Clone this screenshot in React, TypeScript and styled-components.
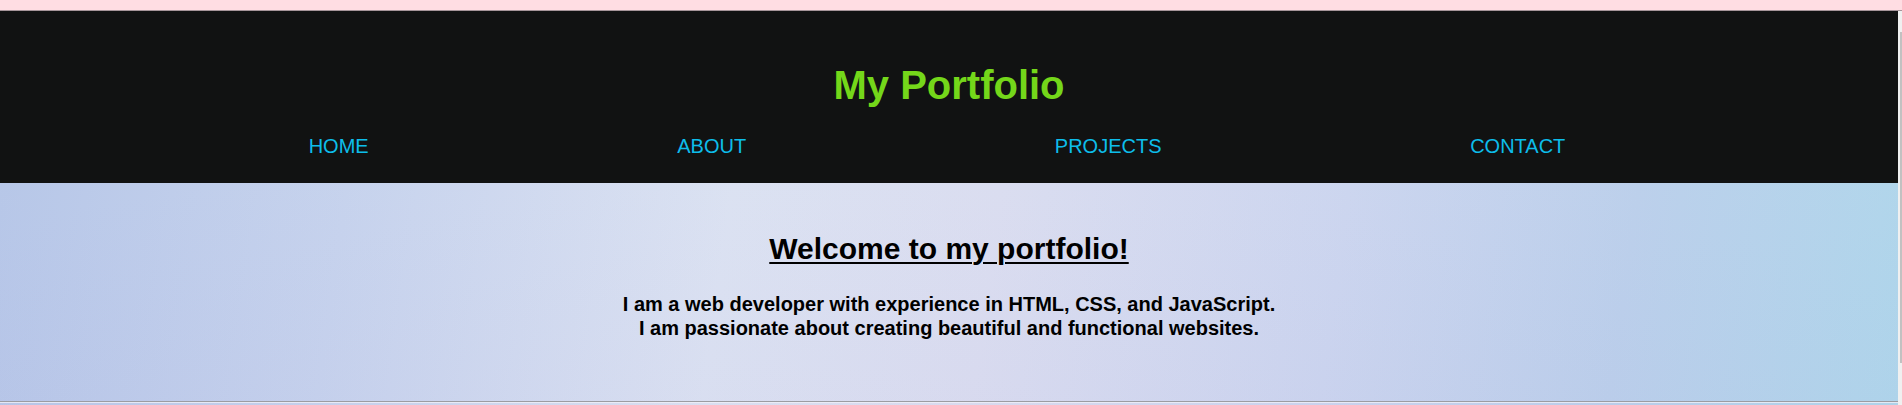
import React from "react";
import styled, { createGlobalStyle } from "styled-components";

const GlobalStyle = createGlobalStyle`
  html, body {
    margin: 0;
    padding: 0;
    height: 405px;
    overflow: hidden;
    background: #ffdde3;
  }
  #root {
    height: 405px;
  }
  * {
    box-sizing: border-box;
  }
`;

const Page = styled.div`
  height: 405px;
  display: flex;
  flex-direction: column;
  padding-top: 10px;
  background: #ffdde3;
  font-family: "Liberation Sans", Arial, sans-serif;
`;

const Window = styled.div`
  flex: 1;
  display: flex;
  min-height: 0;
  border-top: 1px solid #a6959a;
`;

const Content = styled.div`
  flex: 1;
  display: flex;
  flex-direction: column;
  min-width: 0;
`;

const Header = styled.header`
  background: #111212;
  padding: 52px 0 25px;
  text-align: center;
`;

const Title = styled.h1`
  margin: 0;
  font-size: 40px;
  font-weight: 700;
  line-height: normal;
  color: #74d71a;
`;

const Nav = styled.nav`
  margin-top: 27px;
  display: flex;
  justify-content: space-evenly;
  padding-right: 24px;
`;

const NavLink = styled.a`
  font-size: 20px;
  line-height: normal;
  color: #0dbdea;
  text-decoration: none;
`;

const Main = styled.main`
  flex: 1;
  display: flex;
  flex-direction: column;
  background:
    linear-gradient(180deg, rgba(255, 255, 255, 0.06) 0%, rgba(210, 200, 235, 0.08) 100%),
    linear-gradient(
      98deg,
      #b3c4e7 0%,
      #c3d0ec 18%,
      #d9e0f1 38%,
      #d8dbef 52%,
      #c9d3ee 70%,
      #b8cdea 85%,
      #abd4ea 100%
    );
`;

const Hero = styled.section`
  padding: 49px 0 61px;
  text-align: center;
  color: #000;
`;

const Heading = styled.h2`
  margin: 0;
  font-size: 30px;
  font-weight: 700;
  line-height: normal;
  text-decoration: underline;
  text-decoration-thickness: 2px;
  text-underline-offset: 3px;
`;

const Intro = styled.p`
  margin: 26px 0 0;
  font-size: 20px;
  font-weight: 700;
  line-height: 24px;
`;

const Divider = styled.hr`
  margin: 0;
  border: none;
  border-top: 1px solid #9c9ca2;
  border-bottom: 1px solid rgba(240, 240, 248, 0.8);
`;

const Scrollbar = styled.div`
  width: 4px;
  background: #f0f0f0;
  display: flex;
  justify-content: flex-end;
  padding-top: 21px;
`;

const Thumb = styled.div`
  width: 2px;
  height: 331px;
  background: #c1c1c1;
`;

const links = ["HOME", "ABOUT", "PROJECTS", "CONTACT"];

export default function App() {
  return (
    <>
      <GlobalStyle />
      <Page>
        <Window>
          <Content>
            <Header>
              <Title>My Portfolio</Title>
              <Nav>
                {links.map((l) => (
                  <NavLink key={l} href="#">
                    {l}
                  </NavLink>
                ))}
              </Nav>
            </Header>
            <Main>
              <Hero>
                <Heading>Welcome to my portfolio!</Heading>
                <Intro>
                  I am a web developer with experience in HTML, CSS, and JavaScript.
                  <br />
                  I am passionate about creating beautiful and functional websites.
                </Intro>
              </Hero>
              <Divider />
            </Main>
          </Content>
          <Scrollbar>
            <Thumb />
          </Scrollbar>
        </Window>
      </Page>
    </>
  );
}
